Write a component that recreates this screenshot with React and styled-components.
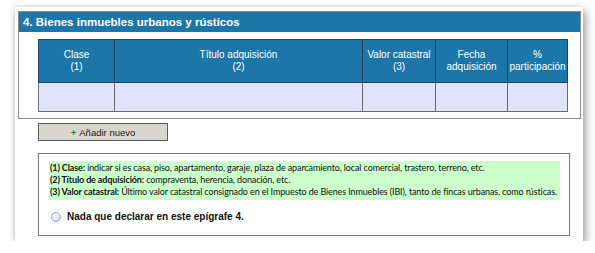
import React from 'react';
import styled, { createGlobalStyle } from 'styled-components';

const GlobalStyle = createGlobalStyle`
  html, body {
    margin: 0;
    padding: 0;
    background: #ffffff;
  }
  body {
    font-family: "Liberation Sans", Arial, sans-serif;
  }
`;

const Card = styled.div`
  box-sizing: border-box;
  width: 568px;
  margin: 7px 0 0 15px;
  padding: 4px 2px 5px 3px;
  background: #ffffff;
  box-shadow: 3px 4px 8px rgba(0, 0, 0, 0.35), -1px -1px 5px rgba(0, 0, 0, 0.12);
`;

const Panel = styled.section`
  box-sizing: border-box;
  width: 563px;
  border: 1px solid #8c8c8c;
  padding-bottom: 6px;
`;

const PanelTitle = styled.h2`
  margin: 0;
  height: 20px;
  line-height: 20px;
  padding-left: 4px;
  background: #1d76a8;
  color: #ffffff;
  font-size: 11.5px;
  font-weight: bold;
`;

const Table = styled.table`
  width: 529px;
  margin: 7px 0 0 19px;
  border-collapse: collapse;
  table-layout: fixed;
  border: 1px solid #5a5a5a;
`;

const HeadCell = styled.th`
  height: 42px;
  padding: 0;
  background: #1d76a8;
  color: #ffffff;
  font-size: 10px;
  font-weight: normal;
  line-height: 12px;
  text-align: center;
  vertical-align: middle;
  border: 1px solid #21445f;
`;

const DataCell = styled.td`
  height: 28px;
  padding: 0;
  background: #dee4fb;
  border: 1px solid #6b6b6b;
`;

const Body = styled.div`
  padding: 4px 0 0 20px;
`;

const AddButton = styled.button`
  box-sizing: border-box;
  width: 130px;
  height: 18px;
  padding: 0;
  background: #d8d4ce;
  border: 1px solid #595959;
  color: #1a1a1a;
  font-family: "Liberation Sans", Arial, sans-serif;
  font-size: 9.5px;
  display: flex;
  align-items: center;
  justify-content: center;
  gap: 3px;
`;

const Plus = styled.span`
  color: #1f8a1f;
  font-weight: bold;
`;

const NotesBox = styled.div`
  box-sizing: border-box;
  width: 532px;
  height: 83px;
  margin-top: 12px;
  padding: 7px 9px 0 10px;
  border: 1px solid #7a7a7a;
`;

const Notes = styled.div`
  background: #ccffcc;
  padding: 1px 1px 2px 1px;
  font-family: Lato, sans-serif;
  font-size: 9px;
  letter-spacing: -0.12px;
  line-height: 12px;
  color: #111111;
`;

const NoteLine = styled.div`
  white-space: nowrap;
  b {
    font-weight: bold;
  }
`;

const RadioRow = styled.label`
  display: flex;
  align-items: center;
  gap: 6px;
  margin-top: 11px;
  padding-left: 2px;
  font-size: 10px;
  font-weight: bold;
  color: #111111;
`;

const RadioDot = styled.span`
  box-sizing: border-box;
  width: 10px;
  height: 10px;
  border-radius: 50%;
  border: 1px solid #9aa3c4;
  background: radial-gradient(circle at 35% 35%, #ffffff 0%, #dfe4f2 60%, #c2c9df 100%);
`;

const columns = [
  { w: 76, label: ['Clase', '(1)'] },
  { w: 248, label: ['Título adquisición', '(2)'] },
  { w: 73, label: ['Valor catastral', '(3)'] },
  { w: 72, label: ['Fecha', 'adquisición'] },
  { w: 60, label: ['%', 'participación'] },
];

const App = () => (
  <>
    <GlobalStyle />
    <Card>
      <Panel>
        <PanelTitle>4. Bienes inmuebles urbanos y rústicos</PanelTitle>
        <Table>
          <colgroup>
            {columns.map((c, i) => (
              <col key={i} style={{ width: c.w }} />
            ))}
          </colgroup>
          <thead>
            <tr>
              {columns.map((c, i) => (
                <HeadCell key={i}>
                  {c.label[0]}
                  <br />
                  {c.label[1]}
                </HeadCell>
              ))}
            </tr>
          </thead>
          <tbody>
            <tr>
              {columns.map((c, i) => (
                <DataCell key={i} />
              ))}
            </tr>
          </tbody>
        </Table>
      </Panel>
      <Body>
        <AddButton type="button">
          <Plus>+</Plus> Añadir nuevo
        </AddButton>
        <NotesBox>
          <Notes>
            <NoteLine>
              <b>(1) Clase:</b> indicar si es casa, piso, apartamento, garaje, plaza de aparcamiento, local comercial, trastero, terreno, etc.
            </NoteLine>
            <NoteLine>
              <b>(2) Título de adquisición:</b> compraventa, herencia, donación, etc.
            </NoteLine>
            <NoteLine>
              <b>(3) Valor catastral:</b> Último valor catastral consignado en el Impuesto de Bienes Inmuebles (IBI), tanto de fincas urbanas, como rústicas.
            </NoteLine>
          </Notes>
          <RadioRow>
            <RadioDot />
            Nada que declarar en este epígrafe 4.
          </RadioRow>
        </NotesBox>
      </Body>
    </Card>
  </>
);

export default App;
